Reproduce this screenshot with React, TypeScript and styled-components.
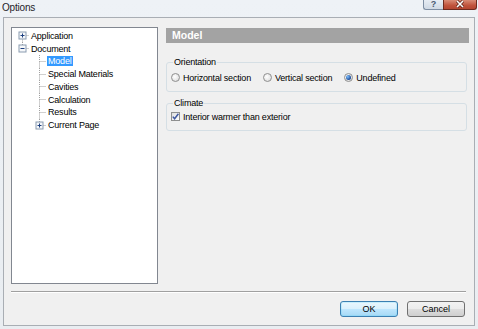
import React from "react";
import styled, { createGlobalStyle, css } from "styled-components";

const GlobalStyle = createGlobalStyle`
  html, body {
    margin: 0;
    padding: 0;
    background: #e9edf1;
  }
  * {
    box-sizing: border-box;
  }
`;

type Node = {
  label: string;
  level: number;
  expander?: "plus" | "minus";
  up?: boolean;
  down?: boolean;
  selected?: boolean;
};

const treeNodes: Node[] = [
  { label: "Application", level: 0, expander: "plus", down: true },
  { label: "Document", level: 0, expander: "minus", up: true },
  { label: "Model", level: 1, down: true, up: true, selected: true },
  { label: "Special Materials", level: 1, up: true, down: true },
  { label: "Cavities", level: 1, up: true, down: true },
  { label: "Calculation", level: 1, up: true, down: true },
  { label: "Results", level: 1, up: true, down: true },
  { label: "Current Page", level: 1, expander: "plus", up: true },
];

const TreeLines = ({ node }: { node: Node }) => {
  const c = 7.5;
  const mid = 6.5;
  return (
    <svg width="14" height="13" viewBox="0 0 14 13">
      <g stroke="#a0a0a0" strokeWidth="1" strokeDasharray="1 1">
        <line x1={c} y1={mid} x2={14} y2={mid} />
        {node.up && <line x1={c} y1={0} x2={c} y2={mid} />}
        {node.down && <line x1={c} y1={mid} x2={c} y2={13} />}
      </g>
      {node.expander && (
        <g>
          <rect x={4} y={3} width={7} height={7} fill="#f6f8fa" stroke="#8a9bb0" />
          <line x1={5.5} y1={6.5} x2={9.5} y2={6.5} stroke="#1c3f80" />
          {node.expander === "plus" && (
            <line x1={c} y1={4.5} x2={c} y2={8.5} stroke="#1c3f80" />
          )}
        </g>
      )}
    </svg>
  );
};

const Radio = ({ checked }: { checked?: boolean }) => (
  <RadioMark $checked={checked} />
);

const App = () => {
  return (
    <>
      <GlobalStyle />
      <Window>
        <TitleBar>
          <Title>Options</Title>
          <Controls>
            <HelpButton>?</HelpButton>
            <CloseButton>
              <svg width="10" height="8" viewBox="0 0 10 8">
                <path d="M2 1 L8 7 M8 1 L2 7" stroke="#5a1e14" strokeWidth="3" />
                <path d="M2 1 L8 7 M8 1 L2 7" stroke="#ffffff" strokeWidth="1.6" />
              </svg>
            </CloseButton>
          </Controls>
        </TitleBar>
        <Frame>
          <Main>
            <Tree>
              {treeNodes.map((node) => (
                <TreeRow key={node.label} $level={node.level}>
                  <TreeLines node={node} />
                  <TreeLabel $selected={node.selected}>{node.label}</TreeLabel>
                </TreeRow>
              ))}
            </Tree>
            <Pane>
              <PaneHeader>Model</PaneHeader>
              <Group>
                <Legend>Orientation</Legend>
                <OptionRow>
                  <Option>
                    <Radio />
                    Horizontal section
                  </Option>
                  <Option>
                    <Radio />
                    Vertical section
                  </Option>
                  <Option>
                    <Radio checked />
                    Undefined
                  </Option>
                </OptionRow>
              </Group>
              <Group $tight>
                <Legend>Climate</Legend>
                <OptionRow>
                  <Option>
                    <CheckBox>
                      <svg width="7" height="7" viewBox="0 0 7 7">
                        <path d="M0.8 3.6 L2.6 5.8 L6.4 0.8" fill="none" stroke="#3f58a0" strokeWidth="1.5" />
                      </svg>
                    </CheckBox>
                    Interior warmer than exterior
                  </Option>
                </OptionRow>
              </Group>
            </Pane>
          </Main>
          <Separator />
          <ButtonRow>
            <DialogButton $default>OK</DialogButton>
            <DialogButton>Cancel</DialogButton>
          </ButtonRow>
        </Frame>
      </Window>
    </>
  );
};

const Window = styled.div`
  width: 478px;
  height: 329px;
  display: flex;
  flex-direction: column;
  background: linear-gradient(#eef2f6, #e9edf1);
  font-family: "Liberation Sans", Arial, sans-serif;
  font-size: 9px;
  color: #000;
  overflow: hidden;
`;

const TitleBar = styled.div`
  height: 17px;
  display: flex;
  justify-content: space-between;
  align-items: flex-start;
`;

const Title = styled.div`
  padding: 2px 0 0 2px;
  font-size: 10px;
  line-height: 11px;
  letter-spacing: -0.2px;
  color: #1e2329;
`;

const Controls = styled.div`
  display: flex;
  margin-right: 1px;
`;

const HelpButton = styled.div`
  width: 20px;
  height: 10px;
  border: 1px solid #7e8ea3;
  border-top: none;
  border-right: none;
  border-radius: 0 0 0 3px;
  background: linear-gradient(#e6ecf3, #cfd9e4);
  color: #4a5a70;
  font-size: 9px;
  font-weight: bold;
  line-height: 8px;
  text-align: center;
`;

const CloseButton = styled.div`
  width: 34px;
  height: 10px;
  border: 1px solid #6d2a1e;
  border-top: none;
  border-radius: 0 0 3px 0;
  background: linear-gradient(#d98c76, #c0533c 60%, #b44631);
  display: flex;
  justify-content: center;
  align-items: center;
  padding-bottom: 1px;
`;

const Frame = styled.div`
  flex: 1;
  margin: 0 3px 3px 3px;
  border: 1px solid #a9aeb4;
  background: #f0f0f0;
  padding: 9px 5px 0 7px;
  display: flex;
  flex-direction: column;
`;

const Main = styled.div`
  display: flex;
  gap: 8px;
`;

const Tree = styled.div`
  width: 147px;
  height: 257px;
  border: 1px solid #828790;
  background: #fff;
  padding-top: 1.5px;
`;

const TreeRow = styled.div<{ $level: number }>`
  height: 12.75px;
  display: flex;
  align-items: center;
  padding-left: ${(p) => 3 + p.$level * 17}px;

  svg {
    flex: none;
  }
`;

const TreeLabel = styled.span<{ $selected?: boolean }>`
  margin-left: 1px;
  padding: 0 1px;
  line-height: 10px;
  letter-spacing: -0.2px;
  white-space: nowrap;
  ${(p) =>
    p.$selected &&
    css`
      background: #3399ff;
      color: #fff;
    `}
`;

const Pane = styled.div`
  flex: 1;
  padding-top: 1px;
  display: flex;
  flex-direction: column;
`;

const PaneHeader = styled.div`
  height: 15px;
  background: #a3a3a3;
  color: #fff;
  font-weight: bold;
  font-size: 10.5px;
  line-height: 15px;
  padding-left: 6px;
  margin-bottom: 14px;
`;

const Group = styled.fieldset<{ $tight?: boolean }>`
  margin: ${(p) => (p.$tight ? "6px" : "0")} 2px 0 0;
  padding: ${(p) => (p.$tight ? "0 0 6px 4px" : "2px 0 6px 4px")};
  border: 1px solid #d5dfe5;
  border-radius: 3px;
  min-width: 0;
`;

const Legend = styled.legend`
  margin-left: 2px;
  padding: 0 1px;
  line-height: 11px;
  letter-spacing: -0.2px;
`;

const OptionRow = styled.div`
  height: 15px;
  display: flex;
  align-items: center;
  gap: 12px;
`;

const Option = styled.label`
  display: flex;
  align-items: center;
  gap: 3px;
  letter-spacing: -0.2px;
  white-space: nowrap;
`;

const RadioMark = styled.span<{ $checked?: boolean }>`
  width: 9px;
  height: 9px;
  border-radius: 50%;
  border: 1px solid #8f8f8f;
  background: radial-gradient(circle at 40% 40%, #ffffff, #d6d6d6);
  display: flex;
  align-items: center;
  justify-content: center;

  &::after {
    content: "";
    width: 5px;
    height: 5px;
    border-radius: 50%;
    display: ${(p) => (p.$checked ? "block" : "none")};
    background: radial-gradient(circle at 35% 35%, #7fc0ff, #1c4a96 70%);
  }
`;

const CheckBox = styled.span`
  width: 9px;
  height: 9px;
  border: 1px solid #8e8f8f;
  background: linear-gradient(135deg, #dedede, #ffffff);
  display: flex;
  align-items: center;
  justify-content: center;
`;

const Separator = styled.div`
  margin: 7px 3px 0 0;
  height: 2px;
  border-top: 1px solid #a0a0a0;
  border-bottom: 1px solid #ffffff;
`;

const ButtonRow = styled.div`
  display: flex;
  justify-content: flex-end;
  gap: 9px;
  margin-top: 8px;
  padding-right: 4px;
`;

const DialogButton = styled.button<{ $default?: boolean }>`
  width: 58px;
  height: 16px;
  padding: 0;
  font-family: "Liberation Sans", Arial, sans-serif;
  font-size: 9px;
  color: #000;
  border-radius: 3px;
  border: 1px solid #707070;
  background: linear-gradient(#f2f2f2 0%, #ebebeb 50%, #dddddd 51%, #cfcfcf 100%);
  ${(p) =>
    p.$default &&
    css`
      border-color: #3c7fb1;
      background: linear-gradient(#eaf6fd 0%, #d9f0fc 50%, #bee6fd 51%, #a7d9f5 100%);
      box-shadow: inset 0 0 0 1px #48d1fa33;
    `}
`;

export default App;
